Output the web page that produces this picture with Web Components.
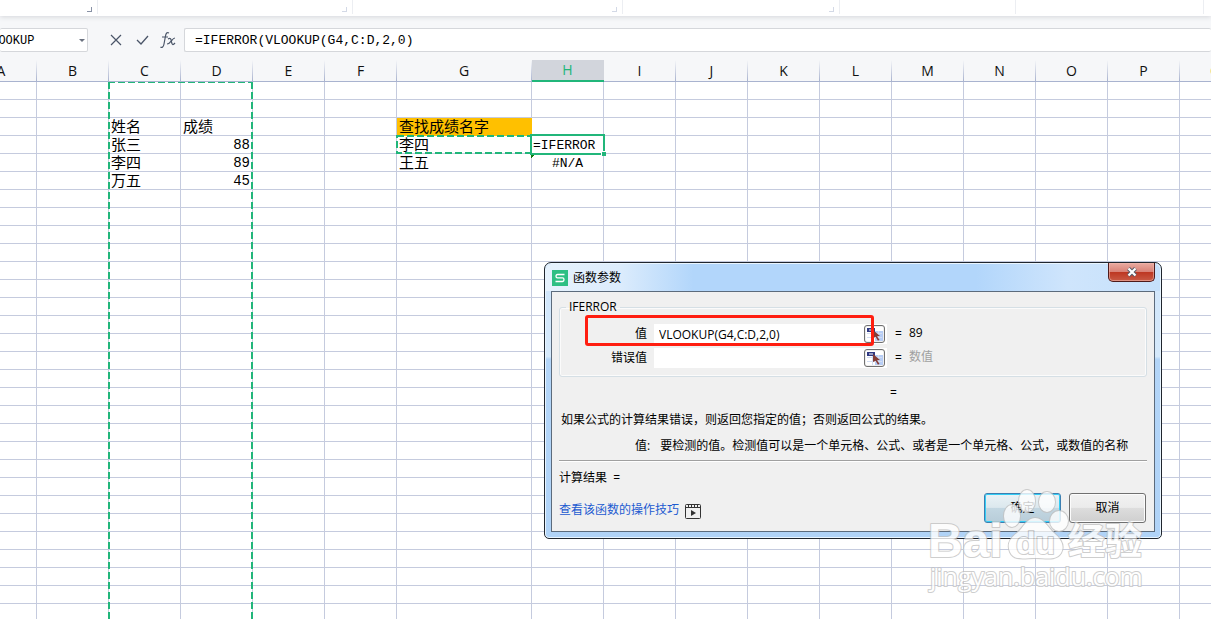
<!DOCTYPE html>
<html lang="zh-CN">
<head>
<meta charset="utf-8">
<title>函数参数</title>
<style>
html, body { margin: 0; height: 100%; }
body { overflow: hidden; font-family: "Open Sans", "Noto Sans CJK SC", sans-serif; font-size: 12px; color: #000; background: #fff; }
</style>
</head>
<body>
<sheet-app></sheet-app>
<script>
function define(name, html, setup) {
  customElements.define(name, class extends HTMLElement {
    constructor() {
      super();
      this.attachShadow({ mode: 'open' }).innerHTML = html;
    }
    connectedCallback() { if (setup) setup(this, this.shadowRoot); }
  });
}

define('ribbon-edge', `
<style>
:host { display: flex; flex: none; height: 16px; box-sizing: border-box; background: #fff; box-shadow: 0 1px 5px #d4d6da; z-index: 1; overflow: visible; }
span { box-sizing: border-box; flex: none; height: 14px; border-right: 1px solid #eceef2; padding: 7px 5px 0 0; display: flex; justify-content: flex-end; }
i { width: 4px; height: 4px; border: solid #d3d9e6; border-width: 0 1px 1px 0; }
.a { width: 98px; } .a i { border-color: #8891a5; }
.b { width: 255px; } .c { width: 270px; } .d { width: 217px; } .e { width: 176px; } .f { width: 188px; }
</style>
<span class="a"><i></i></span><span class="b"><i></i></span><span class="c"><i></i></span><span class="d"><i></i></span><span class="e"></span><span class="f"></span>`);

define('formula-bar', `
<style>
:host { display: flex; flex: none; align-items: center; height: 44px; padding-top: 4px; box-sizing: border-box; background: #f6f7f9; }
input { box-sizing: border-box; height: 24px; border: 1px solid #d5d7db; border-radius: 2px; background: #fff; outline: 0; color: #000; padding: 0; min-width: 0; font: 13px "Liberation Mono", "Noto Sans CJK SC", monospace; }
.name { position: relative; width: 88px; flex: none; display: flex; }
.name input { width: 100%; border-left: 0; font-size: 12px; text-indent: -16px; padding-top: 2px; }
.name svg { position: absolute; right: 3px; top: 11px; }
.tools { display: flex; width: 96px; flex: none; box-sizing: border-box; padding-left: 20px; gap: 10px; }
button { border: 0; background: none; padding: 0; width: 16px; height: 20px; display: flex; align-items: center; justify-content: center; }
.formula { flex: 1; border-right: 0; padding-left: 10px; }
</style>
<div class="name"><input aria-label="名称框" value="VLOOKUP"><svg width="6" height="4"><path d="M0 0h6L3 3z" fill="#6b7280"/></svg></div>
<div class="tools">
<button aria-label="取消"><svg width="12" height="12"><path d="M1 1l10 10M11 1L1 11" stroke="#4a5568" stroke-width="1.2"/></svg></button>
<button aria-label="输入"><svg width="13" height="12"><path d="M1 6l4 4 7-8" fill="none" stroke="#4a5568" stroke-width="1.3"/></svg></button>
<button aria-label="插入函数"><svg width="16" height="18" fill="none" stroke="#4a5568" stroke-width="1.2"><path d="M9 2C7 1 6 2 5.500 5L4 13c-.5 3-2 4-3.500 3M2 6h6M8 8c3-2 3 1 3.500 3s1 4 3.500 1M15 7c-3 0-4 6-8 6"/></svg></button>
</div>
<input class="formula" aria-label="编辑栏" value="=IFERROR(VLOOKUP(G4,C:D,2,0)">`);

define('sheet-grid', `
<style>
:host { display: block; flex: 1; min-height: 0; overflow: hidden; position: relative; }
table { table-layout: fixed; border-collapse: separate; border-spacing: 0; width: 1252px; }
col { width: 72px; } .ca { width: 37px; } .cg { width: 135px; }
th, td { box-sizing: border-box; padding: 0; white-space: nowrap; }
th { height: 22px; background: linear-gradient(#f6f7f900, #a9b3cf) right / 1px 100% no-repeat #f6f7f9; border-bottom: 1px solid #a9b3cf; padding-right: 1px; font: 14px/20px "Open Sans", sans-serif; color: #111; }
th.on { background: #d2d5dc; color: #21b67a; border-bottom: 2px solid #21b67a; }
th.a { text-indent: -34px; } th.q { color: #e59a2c; }
td { height: 18px; border-right: 1px solid #c5cbde; border-bottom: 1px solid #c5cbde; font: 15px/16px "Noto Sans CJK SC", sans-serif; padding-left: 2px; vertical-align: top; }
td.n { text-align: right; padding: 2px 2px 0 0; font: 14px/15px "Liberation Mono", monospace; }
td.m { text-align: center; padding: 2px 0 0; font: 13px/15px "Liberation Mono", monospace; }
td.l { text-align: left; padding: 2px 0 0 1px; }
td.y { background: #ffc000; border-color: #ffc000; }
.mark { position: absolute; pointer-events: none; }
.cols { left: 108px; top: 22px; bottom: -4px; width: 145px; }
.ref { left: 396px; top: 75px; width: 136px; height: 19px; }
.mark svg { display: block; width: 100%; height: 100%; }
.edit { left: 530px; top: 74px; width: 75px; height: 21px; box-sizing: border-box; border: 2px solid #21b67a; }
.edit::after { content: ""; position: absolute; right: -3px; bottom: -3px; width: 4px; height: 4px; background: #21b67a; border: 1px solid #fff; border-width: 1px 0 0 1px; }
.err { left: 531px; top: 95px; width: 4px; height: 4px; background: linear-gradient(135deg, #107c10 50%, #fff0 50%); }
</style>
<table><colgroup></colgroup><thead></thead><tbody></tbody></table>
<div class="mark cols"><svg><path d="M1 0V2000M144 0V2000" stroke="#21b67a" stroke-width="2" stroke-dasharray="7 3"/><path d="M0 .5H145" stroke="#21b67a" stroke-dasharray="7 3"/></svg></div>
<div class="mark ref"><svg><rect x="1" y="1" width="134" height="17" fill="none" stroke="#21b67a" stroke-width="2" stroke-dasharray="7 3"/></svg></div>
<div class="mark edit"></div><div class="mark err"></div>`, (host, root) => {
  const names = 'ABCDEFGHIJKLMNOPQ'.split('');
  const cells = { C3: '姓名', D3: '成绩', C4: '张三', D4: '88', C5: '李四', D5: '89', C6: '万五', D6: '45',
    G3: '查找成绩名字', G4: '李四', G5: '王五', H4: '=IFERROR', H5: '#N/A' };
  const kinds = { D4: 'n', D5: 'n', D6: 'n', G3: 'y', H4: 'm l', H5: 'm' };
  const heads = { A: 'a', H: 'on', Q: 'q' };
  root.querySelector('colgroup').innerHTML = names.map(n => `<col class="c${n.toLowerCase()}">`).join('');
  root.querySelector('thead').innerHTML = '<tr>' + names.map(n => `<th scope="col" class="${heads[n] || ''}">${n}</th>`).join('') + '</tr>';
  let rows = '';
  for (let r = 1; r <= 60; r++)
    rows += '<tr>' + names.map(n => `<td class="${kinds[n + r] || ''}">${cells[n + r] || ''}</td>`).join('') + '</tr>';
  root.querySelector('tbody').innerHTML = rows;
});

define('arg-row', `
<style>
:host { display: flex; align-items: center; height: 24px; font-size: 12px; }
label { width: 87px; text-align: right; flex: none; }
.box { display: flex; align-items: center; justify-content: space-between; background: #fff; height: 20px; width: 233px; margin-left: 7px; box-sizing: border-box; padding-right: 2px; }
input { border: 0; outline: 0; background: none; padding: 0 0 0 5px; width: 200px; height: 20px; box-sizing: border-box; font: inherit; color: #000; }
button { width: 21px; height: 18px; padding: 0; border: 1px solid #707070; border-radius: 3px; background: #eee; display: flex; align-items: center; justify-content: center; flex: none; }
.eq { width: 14px; margin-left: 8px; } output { color: var(--value, #000); padding-bottom: 3px; }
</style>
<label for="v"><slot></slot></label>
<div class="box"><input id="v"><button aria-label="选择区域"><svg width="17" height="14"><path fill="#fff" d="M0 0h17v14H0z"/><path fill="#b7cdf5" d="M9 4h8v10H9z"/><path d="M1 6.500h15M1 10.500h15M6.500 4v10M12.500 4v10" stroke="#d3def2"/><path fill="#303a83" d="M1 1h8v4H1z"/><path fill="#fff" d="M3 2.500h4v1H3z"/><path fill="#843c36" d="M7 3l7 6-3 .2 2.500 3.600-1.500 1-2.400-4L7 11z"/></svg></button></div>
<span class="eq">=</span><output for="v"></output>`, (host, root) => {
  root.querySelector('input').value = host.getAttribute('value') || '';
  root.querySelector('output').textContent = host.getAttribute('result');
});

define('dialog-button', `
<style>
:host { display: block; width: 77px; height: 30px; }
button { width: 100%; height: 100%; box-sizing: border-box; border: 1px solid #707070; border-radius: 3px; box-shadow: inset 0 0 0 1px #fcfcfc; background: linear-gradient(#f2f2f2, #ebebeb 48%, #ddd 50%, #cfcfcf); font: inherit; color: #000; padding: 0; }
:host([primary]) button { border-color: #3c7fb1; box-shadow: inset 0 0 0 1px #34cdf5; background: linear-gradient(#eaf2f6, #dce8ee 48%, #c3d7e2 50%, #b8cdd9); }
</style><button><slot></slot></button>`);

define('function-dialog', `
<style>
:host { display: flex; flex-direction: column; box-sizing: border-box; width: 618px; height: 277px; border: 1px solid #20262e; border-radius: 7px 7px 5px 5px; padding: 0 6px 6px; background: linear-gradient(#cfe5fb, #d5e9fb 34%, #b3d5f8 35%, #b0d3f7); box-shadow: inset 0 0 0 1px #e9f5ff; font: 12px/18px "Open Sans", "Noto Sans CJK SC", sans-serif; }
header { height: 27px; flex: none; display: flex; align-items: center; gap: 5px; margin: 1px -5px 0; padding: 0 5px 0 6px; border-radius: 6px 6px 0 0; background: linear-gradient(90deg, #e6f2fd, #dcecfc 12%, #b2d6fb 24%, #b2d6fb 70%, #cfe5fc 85%, #c5e0fb); }
h1 { margin: 0; padding-bottom: 2px; font: 12px/18px "Noto Sans CJK SC", sans-serif; flex: 1; }
.close { align-self: flex-start; margin-top: -1px; width: 47px; height: 19px; border: 1px solid #4e1a1a; border-top: 0; border-radius: 0 0 5px 5px; padding: 0; background: linear-gradient(#e9aba2, #d98277 48%, #bd3621 50%, #c95a45); box-shadow: inset 0 0 0 1px #f0b8ae99; display: flex; align-items: center; justify-content: center; }
main { flex: 1; box-sizing: border-box; border: 1px solid #5c6b7c; background: #f0f0f0; padding: 6px 7px 0; display: flex; flex-direction: column; }
fieldset { margin: 0; padding: 6px 0 0; border: 1px solid #d5dfe5; border-radius: 3px; box-shadow: inset 0 0 0 1px #fbfbfb; height: 79px; box-sizing: border-box; }
legend { margin-left: 6px; padding: 0 3px; line-height: 18px; }
.total { padding-left: 331px; margin-top: 7px; }
p { margin: 9px 0 0 2px; white-space: nowrap; }
.arg { margin: 8px 0 0 76px; display: flex; gap: 10px; }
hr { width: 100%; margin: 5px 0 0; border: 0; height: 1px; background: #a0a0a0; border-bottom: 1px solid #fff; }
.result { margin: 7px 0 0; }
footer { display: flex; align-items: center; margin-top: 6px; padding-right: 1px; gap: 8px; }
a { color: #1d5bd0; text-decoration: none; margin-right: -2px; padding-top: 4px; }
a + svg { margin: 6px auto 0 0; }
</style>
<header><svg width="16" height="16"><path fill="#2dbf83" d="M0 0h16v16H0z"/><path d="M12.500 4.500H5.500q-1.500 0-1.500 1.700t1.500 1.700h5q1.500 0 1.500 1.800t-1.500 1.800H3.500" fill="none" stroke="#fff" stroke-width="1.300"/></svg><h1>函数参数</h1>
<button class="close" aria-label="关闭"><svg width="12" height="10"><path d="M2.500 1.500l7 7M9.500 1.500l-7 7" stroke="#555b68" stroke-width="4"/><path d="M2.500 1.500l7 7M9.500 1.500l-7 7" stroke="#fff" stroke-width="2.200"/></svg></button></header>
<main>
<fieldset><legend>IFERROR</legend>
<arg-row value="VLOOKUP(G4,C:D,2,0)" result="89">值</arg-row>
<arg-row result="数值" style="--value:#a0a0a0">错误值</arg-row></fieldset>
<div class="total">=</div>
<p>如果公式的计算结果错误，则返回您指定的值；否则返回公式的结果。</p>
<p class="arg"><span>值:</span><span>要检测的值。检测值可以是一个单元格、公式、或者是一个单元格、公式，或数值的名称</span></p>
<hr>
<p class="result">计算结果&nbsp; =</p>
<footer><a href="#">查看该函数的操作技巧</a><svg width="16" height="15"><g fill="none" stroke="#333"><rect x=".5" y=".5" width="15" height="14" rx="1"/><path d="M0 3.500h16M3.500 0v3M6.500 0v3M9.500 0v3M12.500 0v3"/></g><path fill="#333" d="M6 6l5 3-5 3z"/></svg>
<dialog-button primary>确定</dialog-button><dialog-button>取消</dialog-button></footer>
</main>`);

define('site-watermark', `
<style>
:host { display: block; pointer-events: none; opacity: .8; }
svg { display: block; overflow: visible; }
</style>
<svg width="226" height="106" viewBox="0 0 226 106">
<g fill="#fff" stroke="#c2c2c2" stroke-width="2" paint-order="stroke" stroke-linejoin="round">
<ellipse cx="105" cy="16" rx="8" ry="11"/><ellipse cx="125" cy="17" rx="8" ry="10"/><ellipse cx="90" cy="31" rx="8" ry="11"/><ellipse cx="137" cy="36" rx="9" ry="10"/>
<path d="M113 33c-8 0-11 9-18 15-8 6-10 12-7 19 4 9 14 6 25 6s21 3 26-5c4-7 0-14-7-20-6-5-10-15-19-15z"/>
<text x="6" y="72" font-family="Liberation Sans" font-size="48" font-weight="bold">Bai</text>
<text x="94" y="69" font-family="Liberation Sans" font-size="32" font-weight="bold">du</text>
<text x="146" y="70" font-family="Noto Sans CJK SC" font-size="37" font-weight="bold">经验</text>
<text x="8" y="101" font-family="Open Sans" font-size="25">jingyan.baidu.com</text>
</g></svg>`);

define('sheet-app', `
<style>
:host { display: flex; flex-direction: column; height: 100%; position: relative; overflow: hidden; }
function-dialog { position: absolute; left: 544px; top: 262px; z-index: 2; }
.callout { position: absolute; z-index: 3; left: 585px; top: 315px; width: 289px; height: 31px; box-sizing: border-box; border: 3px solid #ff1e10; border-radius: 3px; pointer-events: none; }
site-watermark { position: absolute; z-index: 4; left: 922px; top: 485px; }
</style>
<ribbon-edge></ribbon-edge><formula-bar></formula-bar><sheet-grid></sheet-grid>
<function-dialog></function-dialog><div class="callout"></div><site-watermark></site-watermark>`);
</script>
</body>
</html>
